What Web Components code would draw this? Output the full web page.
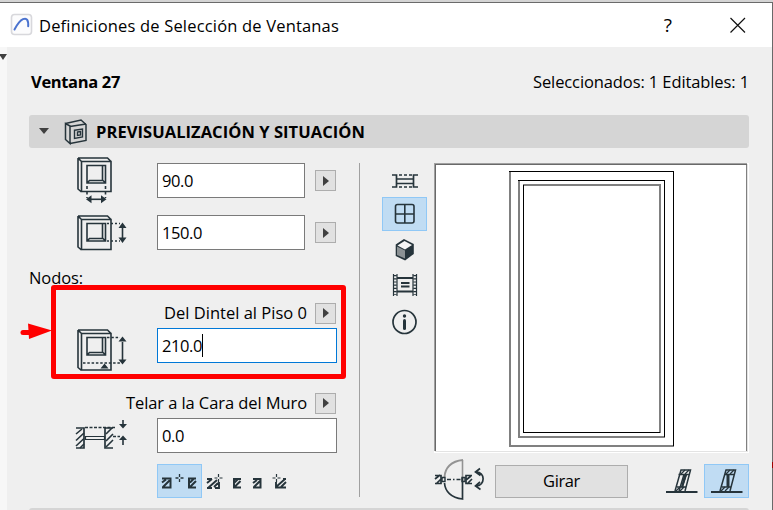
<!DOCTYPE html>
<html lang="es">
<head>
<meta charset="utf-8">
<title>Definiciones de Selección de Ventanas</title>
<style>
html,body{margin:0;width:773px;height:510px;overflow:hidden;background:#efefef;font-family:"Open Sans","Noto Sans",sans-serif;color:#000}
</style>
</head>
<body>
<window-dialog></window-dialog>
<script>
const define = (name, html, setup) => {
  const template = document.createElement('template');
  template.innerHTML = html;
  customElements.define(name, class extends HTMLElement {
    constructor() {
      super();
      this.attachShadow({mode: 'open'}).append(template.content.cloneNode(true));
    }
    connectedCallback() { if (setup) setup(this, this.shadowRoot); }
  });
};

/* Wall block with a window opening, h high, drawn from (0,0) */
const wall = h => `<path d="M1 1.200L4.500 4.500M1 1h29.500l3.500 3.500M1 1v${h - 3.5}l3.500 3M4.500 ${h}V4.500h29.500V${h}z"/><path d="M10 8.500h18.500v17.500h-18.500zM25.500 8.500v14.500l3 3M25.500 23.500h-13l-2.500 2.500"/>`;

const ICONS = {
  logo: [22, 22, `<rect x=".5" y=".5" width="20" height="20" rx="3" fill="#fcfcfd" stroke="#d8d8dc"/><path d="M3.500 15.500C7 9 9 6.500 12 5.200c4-1.700 5.500 1 5.200 7" stroke="#4b73cf" stroke-width="2" stroke-linecap="round"/>`],
  section: [24, 26, `<path d="M1.500 4.500L6 7V24.500L1.500 20.500zM1.500 4.500L17 1l5 4.500V21.500L6 24.500M6 7.500l16-2.500" stroke-width="1.500"/><path d="M10.500 11.200l8-1.200v8l-8 1.500zM13.500 13l3-.5v3.500l-3 .5z" stroke-width="1.400"/>`],
  width: [50, 48, `${wall(34.500)}<path d="M10 29v12M28.500 29v12" stroke-dasharray="3 2.500"/><path d="M12 42.300h15"/><path d="M9 42.300l5.500-4v8zM29.500 42.300l-5.500-4v8z" fill="#26343b" stroke="none"/>`],
  height: [50, 38, `${wall(34.500)}<path d="M30 8.500h13M30 26h13" stroke-dasharray="2 2"/><path d="M45.500 12v12"/><path d="M45.500 7.500l-4 5.500h8zM45.500 28l-4-5.500h8z" fill="#26343b" stroke="none"/>`],
  lintel: [50, 44, `${wall(41)}<path d="M30 8.500h13M6 34h38" stroke-dasharray="2.500 1.800"/><path d="M45.500 13v18"/><path d="M45.500 7.500l-4 5h8zM45.500 35.500l-4-5h8zM27.500 34.500l-4 5h8z" fill="#26343b" stroke="none"/>`],
  reveal: [54, 32, `<path d="M1 9h8v20H1M38 9h-8v20h8" stroke-width="1.700"/><path d="M1 15l6-5M1 21.500l8-7.500M1 27l8-7.500M5 29l4-4M31 15l6-6M31 22l7-7M31 28l7-7"/><path d="M10 8.500h31M38 17.500h7" stroke-dasharray="3 1.500"/><path d="M10 17.500h20M10 20.500h20M10.500 17v4M29.500 17v4" stroke-width="1.200"/><path d="M48 1v5M48 20v6" /><path d="M48 9.500l-4-4.500h8zM48 16.500l-4 4.500h8z" fill="#26343b" stroke="none"/>`],
  anchorBoth: [45, 33, `<path d="M5 13.500h8.500v9H5M5 17.500l4-3M6 22l6.500-6.500M39 13.500h-7v9h7M33 17.500l4-4M33 22l6-6" stroke-width="2"/><path d="M22.500 9v3M22.500 14v3M18.500 13h3M23.500 13h3" stroke-width="1.300"/>`],
  anchorA: [20, 20, `<path d="M1 6h5M1 10l5-4M2 15l9-8M9 15h4V9M1 15h5M8 14l4-4" stroke-width="1.900"/><path d="M12.500 1v3M12.500 6v3M8.500 5h3M13.500 5h3" stroke-width="1.200"/>`],
  anchorB: [12, 20, `<path d="M10 6H3v8.500H10M3 10l4-4M3.500 14l6-6" stroke-width="2"/>`],
  anchorC: [12, 20, `<path d="M1 6h7.500v8.500H1M1 10l4-3M2 14l6-6" stroke-width="2"/>`],
  anchorD: [16, 20, `<path d="M14 6h-3M4 9v5.500h10M4 14l9-8M9 14l5-5" stroke-width="1.900"/><path d="M4.500 1v3M4.500 6v3M.5 5h3M5.500 5h3" stroke-width="1.200"/>`],
  plan: [28, 16, `<path d="M1 2h4.500v12H1M27 2h-4.500v12H27" stroke-width="1.700"/><path d="M8 2h14M8 14h14" stroke-dasharray="3 2"/><path d="M6 6h17M6 10.500h17" stroke-width="1.500"/>`],
  front: [22, 22, `<rect x="1.500" y="1.500" width="18.500" height="18.500" rx="2"/><path d="M10.800 1.500V20M1.500 11H20"/>`],
  cube: [20, 22, `<path d="M1.500 6L9 1l9 4.500v9L10 20.500l-8.500-4z" fill="#26343b"/><path d="M2.500 6.500L9.500 2l7.500 4-7 4.500z" fill="#f5f5f5" stroke="none"/><path d="M2 7.500l8 4v8l-8-3.500z" fill="#8b9194" stroke="none"/>`],
  film: [26, 24, `<path d="M1.500 1v22M24.500 1v22M5 1v22M21 1v22" stroke-width="1.200"/><path d="M3.200 2v20M22.800 2v20" stroke-width="3" stroke-dasharray="1.200 2"/><path d="M5 5h16M5 18.500h16M9 10h8.500M9 13.500h8.500" stroke-width="1.800"/>`],
  info: [26, 26, `<circle cx="12.500" cy="13" r="11.500" stroke-width="1.700"/><circle cx="12.500" cy="7" r="1.700" fill="#26343b" stroke="none"/><path d="M12.500 11.500v8" stroke-width="3" stroke-linecap="round"/>`],
  flip: [52, 42, `<path d="M29 1C17 2 11 9 10.500 18" stroke="#939393" stroke-width="1.900"/><path d="M28.500 1v19" stroke="#939393"/><path d="M28.500 19v21C17 39 11 32 10.500 24" stroke-width="1.700"/><path d="M13 20.500h15" stroke-dasharray="4 2 1.500 2"/><path d="M1 16.500h6v8H1M1 20l5-4M2 25l6-6M38 16.500h-6v8h6M32 21l5-4M33 25l5-5" stroke-width="1.700"/><path d="M8 18.500h3v4H8zM28 18.500h3v4h-3z" stroke-width="1.400"/><path d="M42 13c9.500-.5 9.500 14 0 14M46 9.500L41.500 13l5 3.500M46 23l-4.500 4 5 3.500" stroke-width="1.700"/>`],
  tiltA: [32, 28, `<path d="M0 25h31.500" stroke-width="2"/><path d="M9 24L15 3h9.500L19 24M12.500 7.500h10M11 20h9M13 24L18 7.500M16 21l4-13" stroke-width="1.500"/><path d="M15 20l3-12h3l-4 12z" fill="#26343b" stroke="none"/><path d="M15 7l4-4M19 7l4-4M10 24l4-4M14 24l4-4" stroke-width="1.300"/>`],
  tiltB: [32, 28, `<path d="M0 25h31.500" stroke-width="2"/><path d="M9 24L15 3h9.500L19 24M13.500 7.500h10M11 20h9" stroke-width="1.500"/><path d="M15.500 8h3v12h-3z" fill="#26343b" stroke="none"/><path d="M15 7l4-4M19 7l4-4M10 24l4-4M14 24l4-4" stroke-width="1.300"/>`],
  close: [16, 16, `<path d="M.5 1L15 15.500M15 1L.5 15.500" stroke="#111" stroke-width="1.200"/>`],
};

define('ui-icon', `<style>:host{display:block;flex:none}svg{display:block;overflow:visible}</style>`, (el, root) => {
  const [w, h, body] = ICONS[el.getAttribute('name')];
  root.innerHTML += `<svg width="${w}" height="${h}" viewBox="0 0 ${w} ${h}" fill="none" stroke="#26343b" stroke-width="1.600">${body}</svg>`;
});

/* Text set to a fixed width by even tracking */
define('ui-text', `<style>:host{display:block;white-space:pre;font-size:16.500px;line-height:22px;flex:none}span{display:inline-block}</style><span><slot></slot></span>`, (el, root) => {
  const span = root.querySelector('span');
  const width = Number(el.getAttribute('fit'));
  const count = el.textContent.length;
  if (width && count) {
    const space = (width - span.getBoundingClientRect().width) / count;
    span.style.letterSpacing = space + 'px';
  }
});

define('title-bar', `<style>
:host{display:flex;height:44px;background:#fff;align-items:center;padding-left:11px;box-sizing:border-box}
ui-icon[name=logo]{margin:-1px 6px 0 0}
::slotted(ui-text){margin-top:1px}
.help{margin-left:auto;margin-right:58px;font-size:19px}
ui-icon[name=close]{margin-right:26px;margin-top:-1px}
</style><ui-icon name="logo"></ui-icon><slot></slot><ui-text class="help">?</ui-text><ui-icon name="close"></ui-icon>`);

define('section-header', `<style>
:host{display:flex;align-items:center;height:33px;background:#d5d5d5;border-radius:3px;box-sizing:border-box;padding-left:10px;font-weight:700}
i{width:0;height:0;border:5px solid transparent;border-top:6px solid #404040;border-bottom:0;margin-right:15px;margin-top:-1px}
ui-icon{margin-right:8px}
</style><i></i><ui-icon name="section"></ui-icon><slot></slot>`);

define('arrow-button', `<style>
:host{display:flex;width:21px;height:21px;box-sizing:border-box;border:1px solid #adadad;background:#e1e1e1;align-items:center;justify-content:center;flex:none}
i{border:5px solid transparent;border-left:6px solid #404040;border-right:0;margin-left:1px}
</style><i></i>`);

define('number-field', `<style>
:host{display:flex;align-items:center;width:148px;height:35px;box-sizing:border-box;border:1px solid #7a7a7a;background:#fff;padding-left:4px;flex:none}
:host([wide]){width:180px}
:host([focused]){border-color:#0078d7}
b{display:none;width:1px;height:23px;background:#000}
:host([focused]) b{display:block}
</style><slot></slot><b></b>`);

define('tool-button', `<style>
:host{display:flex;align-items:center;justify-content:center;width:45px;height:34px;box-sizing:border-box;border:1px solid transparent;flex:none}
:host([selected]){background:#c0dcf3;border-color:#90c8f6}
</style><slot></slot>`);

define('push-button', `<style>
:host{display:flex;align-items:center;justify-content:center;width:133px;height:33px;box-sizing:border-box;border:1px solid #adadad;background:#e1e1e1}
</style><slot></slot>`);

define('size-panel', `<style>
:host{display:grid;grid-template-columns:128px 180px;grid-template-rows:35px 17px 35px 17px 22px 13px 22px 4px 35px 29px 22px 4px 35px 11px 34px;width:330px;position:relative;box-sizing:border-box}
.row{display:flex;gap:10px;align-items:center;grid-column:2}
.label{grid-column:1/3;display:flex;justify-content:flex-end;align-items:center;gap:8px;margin-right:1px}
.ic{grid-column:1;padding-left:48px}
.anchors{grid-column:2;display:flex;align-items:center}
.anchors>ui-icon{margin-top:3px}
.mark{position:absolute;left:22px;top:122px;width:295px;height:94px;box-sizing:border-box;border:5px solid #f00;border-radius:3px}
.pointer{position:absolute;left:-9px;top:159px}
</style>
<ui-icon class="ic" name="width" style="grid-row:1;margin-top:-6px"></ui-icon><div class="row" style="grid-row:1"><number-field><ui-text fit="31">90.0</ui-text></number-field><arrow-button></arrow-button></div>
<ui-icon class="ic" name="height" style="grid-row:3"></ui-icon><div class="row" style="grid-row:3"><number-field><ui-text fit="40">150.0</ui-text></number-field><arrow-button></arrow-button></div>
<ui-text fit="54" style="grid-row:5">Nodos:</ui-text>
<div class="label" style="grid-row:7"><ui-text fit="143">Del Dintel al Piso 0</ui-text><arrow-button></arrow-button></div>
<ui-icon class="ic" name="lintel" style="grid-row:9;margin-top:1px"></ui-icon><number-field wide focused style="grid-row:9;grid-column:2"><ui-text fit="40">210.0</ui-text></number-field>
<div class="label" style="grid-row:11"><ui-text fit="181">Telar a la Cara del Muro</ui-text><arrow-button></arrow-button></div>
<ui-icon class="ic" name="reveal" style="grid-row:13;padding-left:46px;margin-top:1px"></ui-icon><number-field wide style="grid-row:13;grid-column:2"><ui-text fit="22">0.0</ui-text></number-field>
<div class="anchors" style="grid-row:15"><tool-button selected><ui-icon name="anchorBoth"></ui-icon></tool-button><ui-icon name="anchorA" style="margin-left:4px"></ui-icon><ui-icon name="anchorB" style="margin-left:5px"></ui-icon><ui-icon name="anchorC" style="margin-left:9px"></ui-icon><ui-icon name="anchorD" style="margin-left:8px"></ui-icon></div>
<div class="mark"></div>
<svg class="pointer" width="34" height="18"><path d="M3 10.500h9" stroke="#f00" stroke-width="5" stroke-linecap="round"/><path d="M8 1.500L32 8.500 9 17z" fill="#f00"/></svg>`);

define('view-tools', `<style>
:host{display:grid;grid-template-rows:34px 34px 37px 35px 38px;width:45px;align-content:start}
tool-button{align-self:center}
</style>
<tool-button><ui-icon name="plan" style="margin-top:1px"></ui-icon></tool-button>
<tool-button selected><ui-icon name="front"></ui-icon></tool-button>
<tool-button><ui-icon name="cube"></ui-icon></tool-button>
<tool-button><ui-icon name="film" style="margin-top:-2px"></ui-icon></tool-button>
<tool-button><ui-icon name="info"></ui-icon></tool-button>`);

define('window-preview', `<style>
:host{display:block;width:315px;height:290px;box-sizing:border-box;background:#fff}
svg{display:block}
</style>
<svg width="315" height="290" shape-rendering="crispEdges">
<path d="M0 0h313v1H0zM0 0h1v288H0z" fill="#a0a0a0"/><path d="M1 1h312v1H1zM1 1h1v287H1z" fill="#696969"/><path d="M312 2h1v286h-1z" fill="#808080"/><path d="M1 288h313v1H1zM313 1h1v288h-1z" fill="#e3e3e3"/>
<path fill="#808080" d="M75 8h2v276h-2zM75 282h165v2H75zM84 17h2v258h-2zM84 273h147v2H84zM89 21h138v2H89zM225 21h2v249h-2z"/>
<path fill="#000" d="M75 8h165v1H75zM239 8h1v275h-1zM84 17h147v1H84zM230 17h1v257h-1zM89 22h1v248h-1zM89 269h137v1H89z"/>
</svg>`);

define('preview-panel', `<style>
:host{display:flex;flex-direction:column;gap:11px;width:315px}
.bar{display:flex;align-items:center;height:34px}
</style>
<window-preview></window-preview>
<div class="bar"><ui-icon name="flip" style="width:61px;margin-top:-2px"></ui-icon><push-button><ui-text fit="37">Girar</ui-text></push-button><tool-button style="margin-left:31px"><ui-icon name="tiltA"></ui-icon></tool-button><tool-button selected><ui-icon name="tiltB"></ui-icon></tool-button></div>`);

define('window-dialog', `<style>
:host{display:grid;grid-template-columns:7px 765px 1px;grid-template-rows:2px 1px 44px 463px;width:773px;height:510px}
.above{grid-column:1/4;background:#d4d4d4;overflow:hidden}
.edge{grid-column:1/4;background:#6a6a6a}
title-bar{grid-column:1/3}
.right{grid-column:3;grid-row:3/5;background:linear-gradient(#696969 0 459px,#a00000 459px 465px,#696969 465px)}
.left{grid-column:1;background:#f7f7f7}
.left i{display:block;width:0;border:4px solid transparent;border-top:6px solid #404040;border-bottom:0;margin:7px 0 0 -1px}
main{grid-column:2;padding:24px 23px 0 22px;display:flex;flex-direction:column;overflow:hidden}
.head{display:flex;justify-content:space-between;padding-left:2px;height:44px;flex:none}
.content{display:flex;height:335px;margin-top:15px;flex:none}
.line{width:1px;height:334px;background:#a0a0a0;margin-right:22px}
.next{height:5px;margin-top:10px;background:#d5d5d5;border-radius:3px 3px 0 0;flex:none}
section-header{flex:none}
</style>
<div class="above"><svg width="20" height="2"><path d="M2 2l4-2 4 2" fill="none" stroke="#333" stroke-width="1.500"/></svg></div><div class="edge"></div>
<title-bar><ui-text fit="300">Definiciones de Selección de Ventanas</ui-text></title-bar><div class="right"></div>
<div class="left"><i></i></div>
<main>
<div class="head"><ui-text fit="89" style="font-weight:700">Ventana 27</ui-text><ui-text fit="216">Seleccionados: 1 Editables: 1</ui-text></div>
<section-header><ui-text fit="269">PREVISUALIZACIÓN Y SITUACIÓN</ui-text></section-header>
<div class="content"><size-panel></size-panel><div class="line"></div><view-tools></view-tools><preview-panel style="margin-left:7px"></preview-panel></div>
<div class="next"></div>
</main>`);
</script>
</body>
</html>
